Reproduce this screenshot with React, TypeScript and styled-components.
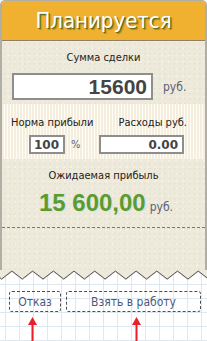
import React from 'react';
import styled, {createGlobalStyle} from 'styled-components';

const GlobalStyle = createGlobalStyle`
  html, body {
    margin: 0;
    padding: 0;
  }
  body {
    width: 207px;
    height: 341px;
    overflow: hidden;
    font-family: 'DejaVu Sans Condensed', 'DejaVu Sans', sans-serif;
    font-stretch: semi-condensed;
    background-color: #ffffff;
    background-image:
      linear-gradient(#dde8f1 1px, transparent 1px),
      linear-gradient(90deg, #dde8f1 1px, transparent 1px);
    background-size: 14px 14px;
    background-position: 5px 4px;
  }
`;

const Page = styled.div`
  position: relative;
  width: 207px;
  height: 341px;
  overflow: hidden;
`;

const Card = styled.div`
  border: 2px solid #b1aea6;
  border-top-width: 1px;
  border-bottom: none;
  border-radius: 5px 5px 0 0;
  background-color: #eeeadb;
  background-image:
    radial-gradient(rgba(150, 130, 90, 0.08) 1px, transparent 1px),
    radial-gradient(rgba(255, 255, 255, 0.35) 1px, transparent 1px);
  background-size: 5px 5px, 7px 7px;
  background-position: 0 0, 3px 2px;
  overflow: hidden;
`;

const Header = styled.div`
  height: 39px;
  background: #efb12f;
  border-bottom: 1px solid #8e8063;
  display: flex;
  align-items: center;
  justify-content: center;
`;

const Title = styled.h1`
  margin: 0;
  font-size: 22px;
  font-weight: normal;
  color: #ffffff;
  text-shadow: 1px 1px 0 #5f6b16, 2px 2px 1px rgba(60, 60, 0, 0.35);
`;

const Label = styled.div<{ $align?: string }>`
  font-size: 11px;
  line-height: 14px;
  color: #222222;
  text-align: ${p => p.$align || 'center'};
  white-space: nowrap;
`;

const SumSection = styled.div`
  padding-top: 10px;
`;

const InputRow = styled.div`
  display: flex;
  align-items: center;
  margin-top: 8px;
  padding-left: 10px;
  gap: 10px;
`;

const ValueBox = styled.div<{ $width: number; $height: number; $size: number; $font?: string }>`
  box-sizing: border-box;
  width: ${p => p.$width}px;
  height: ${p => p.$height}px;
  background: #ffffff;
  border: 2px solid #8e8e8e;
  display: flex;
  align-items: center;
  justify-content: flex-end;
  padding-right: 4px;
  font-family: ${p => p.$font || "'DejaVu Sans', sans-serif"};
  font-stretch: normal;
  font-weight: bold;
  font-size: ${p => p.$size}px;
  color: #444444;
`;

const Unit = styled.span<{ $size?: number }>`
  font-size: ${p => p.$size || 12}px;
  color: #5a6078;
`;

const Band = styled.div`
  margin-top: 4px;
  height: 55px;
  box-sizing: border-box;
  padding-top: 12px;
  display: flex;
  background-image: repeating-linear-gradient(90deg, #f3eedd 0 2px, #fffdf6 2px 3px);
`;

const Column = styled.div<{ $width: number; $pad: number }>`
  width: ${p => p.$width}px;
  padding-left: ${p => p.$pad}px;
  box-sizing: border-box;
  display: flex;
  flex-direction: column;
  gap: 5px;
`;

const SmallRow = styled.div`
  display: flex;
  align-items: center;
  gap: 6px;
  padding-left: 18px;
`;

const ProfitSection = styled.div`
  padding-top: 10px;
`;

const ProfitRow = styled.div`
  display: flex;
  justify-content: center;
  align-items: baseline;
  gap: 4px;
  margin-top: 6px;
  padding-left: 5px;
`;

const Profit = styled.span`
  font-family: 'Liberation Sans', Arial, sans-serif;
  font-weight: bold;
  font-size: 24px;
  line-height: 28px;
  color: #5d9b2d;
  text-shadow: 1px 1px 0 #cfe6ee;
`;

const Divider = styled.div`
  margin-top: 10px;
  height: 0;
  border-top: 1px dashed #7a7a72;
`;

const Spacer = styled.div`
  height: 43px;
`;

const Zigzag = styled.svg`
  display: block;
  margin-top: -1px;
`;

const Actions = styled.div`
  display: flex;
  gap: 5px;
  padding-left: 9px;
  margin-top: 9px;
`;

const ActionButton = styled.button<{ $width: number }>`
  width: ${p => p.$width}px;
  height: 21px;
  box-sizing: border-box;
  border: 1px dashed #4d4d4d;
  border-radius: 3px;
  background: transparent;
  padding: 0;
  font-family: 'DejaVu Sans Condensed', 'DejaVu Sans', sans-serif;
  font-stretch: semi-condensed;
  font-size: 12px;
  color: #475a7e;
  cursor: pointer;
`;

const Arrow = styled.svg<{ $left: number }>`
  position: absolute;
  top: 317px;
  left: ${p => p.$left}px;
`;

const zigzagPoints = (dy: number) => {
  const pts: string[] = [`-2,-1`, `-2,${9 + dy}`];
  for (let k = -1; k < 11; k++) {
    const tip = 1.6 + k * 20.7;
    pts.push(`${tip.toFixed(1)},${9 + dy}`);
    pts.push(`${(tip + 10.35).toFixed(1)},${1 + dy}`);
  }
  pts.push(`209,${9 + dy}`, '209,-1');
  return pts.join(' ');
};

const RedArrow = ({left}: { left: number }) => (
  <Arrow $left={left} width="9" height="24" viewBox="0 0 9 24">
    <polygon points="4.5,0 9,8 0,8" fill="#e8202b" />
    <rect x="3.5" y="6" width="2" height="18" fill="#e8202b" />
  </Arrow>
);

const App = () => {
  return (
    <Page>
      <GlobalStyle />
      <Card>
        <Header>
          <Title>Планируется</Title>
        </Header>
        <SumSection>
          <Label>Сумма сделки</Label>
          <InputRow>
            <ValueBox $width={141} $height={27} $size={21} $font="'Liberation Sans', Arial, sans-serif">15600</ValueBox>
            <Unit>руб.</Unit>
          </InputRow>
        </SumSection>
        <Band>
          <Column $width={97} $pad={9}>
            <Label $align="left">Норма прибыли</Label>
            <SmallRow>
              <ValueBox $width={36} $height={19} $size={12}>100</ValueBox>
              <Unit $size={11}>%</Unit>
            </SmallRow>
          </Column>
          <Column $width={88} $pad={0}>
            <Label $align="right">Расходы руб.</Label>
            <ValueBox $width={85} $height={19} $size={12}>0.00</ValueBox>
          </Column>
        </Band>
        <ProfitSection>
          <Label>Ожидаемая прибыль</Label>
          <ProfitRow>
            <Profit>15 600,00</Profit>
            <Unit>руб.</Unit>
          </ProfitRow>
        </ProfitSection>
        <Divider />
        <Spacer />
      </Card>
      <Zigzag width="207" height="12" viewBox="0 0 207 12">
        <polygon points={zigzagPoints(1)} fill="#c9c9c9" />
        <polygon points={zigzagPoints(0)} fill="#eeeadb" stroke="#5a5a5a" strokeWidth="1" />
      </Zigzag>
      <Actions>
        <ActionButton $width={52}>Отказ</ActionButton>
        <ActionButton $width={135}>Взять в работу</ActionButton>
      </Actions>
      <RedArrow left={28} />
      <RedArrow left={132} />
    </Page>
  );
};

export default App;
